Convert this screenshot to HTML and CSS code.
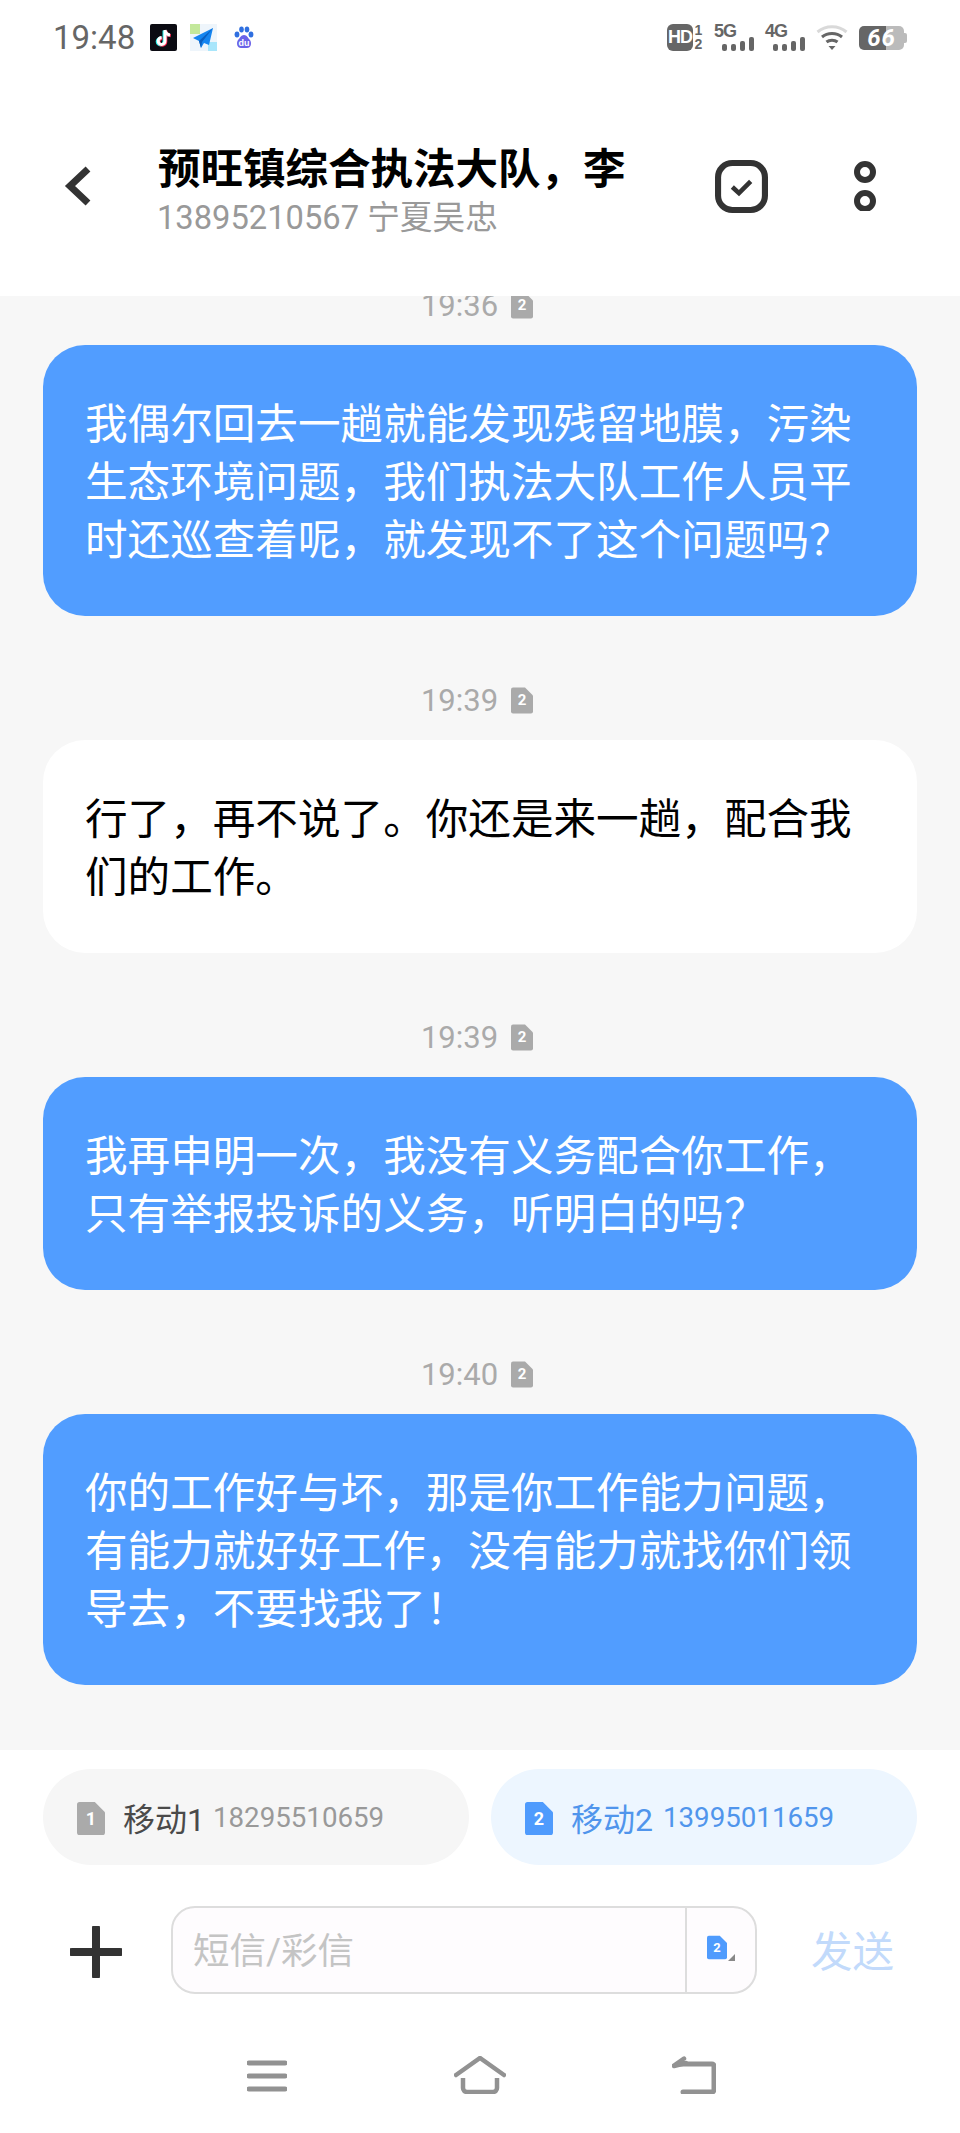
FILE: index.html
```html
<!DOCTYPE html>
<html lang="zh-CN">
<head>
    <meta charset="UTF-8">
    <meta name="viewport" content="width=device-width, initial-scale=1.0">
    <title>短信</title>
    <link rel="stylesheet" href="styles.css">
</head>
<body>
    <svg class="defs">
        <symbol id="sim" viewBox="0 0 22 26">
            <path d="M2 0h12l8 8v16a2 2 0 0 1-2 2H2a2 2 0 0 1-2-2V2a2 2 0 0 1 2-2z" fill="currentColor"/>
        </symbol>
    </svg>

    <div class="phone">
        <div class="status-bar">
            <div class="status-left">
                <span class="clock">19:48</span>
                <svg class="app-icon" viewBox="0 0 27 27">
                    <rect width="27" height="27" rx="2" fill="#0b0b12"/>
                    <path d="M15 6v11a3.4 3.4 0 1 1-3.4-3.4M15 6c.4 3 2.200 4.600 5 5" fill="none" stroke="#25f4ee" stroke-width="3" transform="translate(-1 .6)"/>
                    <path d="M15 6v11a3.400 3.400 0 1 1-3.400-3.400M15 6c.4 3 2.200 4.600 5 5" fill="none" stroke="#fe2c55" stroke-width="3" transform="translate(.8 .8)"/>
                    <path d="M15 6v11a3.400 3.400 0 1 1-3.400-3.400M15 6c.4 3 2.200 4.600 5 5" fill="none" stroke="#fff" stroke-width="3"/>
                </svg>
                <svg class="app-icon" viewBox="0 0 27 27">
                    <rect width="27" height="27" fill="#eef5fb"/>
                    <rect width="10" height="10" fill="#c3e89b"/>
                    <rect x="18" y="18" width="9" height="9" fill="#a9e6fb"/>
                    <path d="M23 4 3 14l6 3 2 7 3-5 5 2z" fill="#1585f0"/>
                    <path d="M23 4 9 17l2 7 1-6z" fill="#0b5fc0"/>
                </svg>
                <svg class="paw" viewBox="0 0 20 24">
                    <ellipse cx="3" cy="8.500" rx="2.400" ry="3" fill="#2f6fe0"/>
                    <ellipse cx="7.500" cy="3.500" rx="2.300" ry="3" fill="#2f6fe0"/>
                    <ellipse cx="13" cy="3.500" rx="2.300" ry="3" fill="#2f6fe0"/>
                    <ellipse cx="17" cy="8.500" rx="2.400" ry="3" fill="#2f6fe0"/>
                    <path d="M10 9c-3 0-4 3-6 5-2 3-1 8 3 8h6c4 0 5-5 3-8-2-2-3-5-6-5z" fill="#6a63e8"/>
                    <text x="10" y="20" class="paw-text">du</text>
                </svg>
            </div>
            <div class="status-right">
                <span class="hd">HD</span>
                <span class="sim-nums"><span>1</span><span>2</span></span>
                <span class="signal">
                    <span class="signal-name">5G</span>
                    <span class="bars"><i class="b1"></i><i class="b2"></i><i class="b3"></i><i class="b4"></i></span>
                </span>
                <span class="signal">
                    <span class="signal-name">4G</span>
                    <span class="bars"><i class="b1"></i><i class="b2"></i><i class="b3"></i><i class="b4"></i></span>
                </span>
                <svg class="wifi" viewBox="0 0 32 26">
                    <path d="M1.500 8C9.500 1 22.500 1 30.500 8" fill="none" stroke="#d9d9d9" stroke-width="3"/>
                    <path d="M6 13c5.500-4.600 14.500-4.600 20 0" fill="none" stroke="#666" stroke-width="3"/>
                    <path d="M10.500 18c3-2.500 8-2.500 11 0" fill="none" stroke="#666" stroke-width="3"/>
                    <path d="M12.500 22h7L16 26z" fill="#666"/>
                </svg>
                <span class="battery"><span class="battery-num">66</span></span>
            </div>
        </div>

        <header class="topbar">
            <svg class="back" viewBox="0 0 28 44">
                <path d="M24 5 6 22l18 17" fill="none" stroke="#333" stroke-width="7"/>
            </svg>
            <div class="contact">
                <div class="contact-name">预旺镇综合执法大队，李</div>
                <div class="contact-sub">13895210567 宁夏吴忠</div>
            </div>
            <svg class="select-icon" viewBox="0 0 52 52">
                <rect x="3" y="3" width="46" height="46" rx="14" fill="none" stroke="#333" stroke-width="6"/>
                <path d="M17 26.500l6.500 6L35 21" fill="none" stroke="#333" stroke-width="4.500"/>
            </svg>
            <svg class="more-icon" viewBox="0 0 22 50">
                <circle cx="11" cy="11" r="8" fill="none" stroke="#333" stroke-width="6"/>
                <circle cx="11" cy="40" r="8" fill="none" stroke="#333" stroke-width="6"/>
            </svg>
        </header>

        <main class="chat">
            <div class="messages">
                <div class="time-row"><span>19:36</span><span class="time-sim"><svg><use href="#sim"/></svg><b>2</b></span></div>
                <div class="bubble sent">我偶尔回去一趟就能发现残留地膜，污染生态环境问题，我们执法大队工作人员平时还巡查着呢，就发现不了这个问题吗？</div>

                <div class="time-row"><span>19:39</span><span class="time-sim"><svg><use href="#sim"/></svg><b>2</b></span></div>
                <div class="bubble received">行了，再不说了。你还是来一趟，配合我们的工作。</div>

                <div class="time-row"><span>19:39</span><span class="time-sim"><svg><use href="#sim"/></svg><b>2</b></span></div>
                <div class="bubble sent">我再申明一次，我没有义务配合你工作，只有举报投诉的义务，听明白的吗？</div>

                <div class="time-row"><span>19:40</span><span class="time-sim"><svg><use href="#sim"/></svg><b>2</b></span></div>
                <div class="bubble sent">你的工作好与坏，那是你工作能力问题，有能力就好好工作，没有能力就找你们领导去，不要找我了！</div>
            </div>
        </main>

        <div class="sim-picker">
            <div class="sim-pill">
                <span class="pill-sim"><svg><use href="#sim"/></svg><b>1</b></span>
                <span class="pill-name">移动1</span>
                <span class="pill-number">18295510659</span>
            </div>
            <div class="sim-pill active">
                <span class="pill-sim"><svg><use href="#sim"/></svg><b>2</b></span>
                <span class="pill-name">移动2</span>
                <span class="pill-number">13995011659</span>
            </div>
        </div>

        <div class="composer">
            <svg class="plus" viewBox="0 0 52 52">
                <path d="M26 2v48M2 26h48" fill="none" stroke="#333" stroke-width="8" stroke-linecap="round"/>
            </svg>
            <div class="input-box">
                <div class="input-text">短信/彩信</div>
                <div class="input-sim">
                    <span class="small-sim"><svg><use href="#sim"/></svg><b>2</b></span>
                    <i class="corner"></i>
                </div>
            </div>
            <div class="send">发送</div>
        </div>

        <nav class="navbar">
            <svg class="nav-menu" viewBox="0 0 40 32">
                <path d="M2 3h36M2 16h36M2 29h36" fill="none" stroke="#929292" stroke-width="5" stroke-linecap="round"/>
            </svg>
            <svg class="nav-home" viewBox="0 0 52 38">
                <path d="M2 19 26 2l24 17" fill="none" stroke="#929292" stroke-width="4.500" stroke-linecap="round"/>
                <path d="M9 22v10a4 4 0 0 0 4 4h26a4 4 0 0 0 4-4V22" fill="none" stroke="#929292" stroke-width="4.500"/>
            </svg>
            <svg class="nav-back" viewBox="0 0 44 38">
                <path d="M2 10 14 7M12 2.500l-10 7" fill="none" stroke="#929292" stroke-width="4.500" stroke-linecap="round"/>
                <path d="M8 8h32a2 2 0 0 1 2 2v24a2 2 0 0 1-2 2H11" fill="none" stroke="#929292" stroke-width="5" stroke-linecap="round"/>
            </svg>
        </nav>
    </div>
</body>
</html>
```

FILE: styles.css
```css
* {
    box-sizing: border-box;
}
body {
    margin: 0;
    background: white;
    font-family: Roboto, "Noto Sans CJK SC", sans-serif;
}
.defs {
    display: none;
}
.phone {
    width: 960px;
    height: 2133px;
    display: flex;
    flex-direction: column;
    overflow: hidden;
    background: white;
}

/* status bar */
.status-bar {
    height: 76px;
    flex: none;
    display: flex;
    justify-content: space-between;
    padding: 21px 53px 0;
    color: #666;
}
.status-left {
    height: 32px;
    display: flex;
    align-items: center;
}
.clock {
    font-size: 33px;
    width: 97px;
}
.app-icon {
    width: 27px;
    height: 27px;
    margin-right: 13px;
    margin-top: 1px;
}
.paw {
    width: 20px;
    height: 24px;
    margin-left: 4px;
    margin-top: 1px;
}
.paw-text {
    font-family: "Liberation Sans", sans-serif;
    font-size: 9px;
    font-weight: bold;
    fill: white;
    text-anchor: middle;
}
.status-right {
    display: flex;
    align-items: flex-start;
    margin-top: 3px;
}
.hd {
    width: 26px;
    height: 27px;
    background: #666;
    border-radius: 6px;
    color: white;
    font-family: "Liberation Sans", sans-serif;
    font-size: 18px;
    font-weight: bold;
    line-height: 27px;
    text-align: center;
    letter-spacing: -1px;
}
.sim-nums {
    width: 11px;
    display: flex;
    flex-direction: column;
    font-family: "Liberation Sans", sans-serif;
    font-size: 14px;
    font-weight: bold;
    line-height: 13.500px;
    text-align: center;
}
.signal {
    width: 40px;
    margin-left: 10px;
    display: flex;
    flex-direction: column;
}
.signal + .signal {
    margin-left: 11px;
}
.signal-name {
    font-family: "Liberation Sans", sans-serif;
    font-size: 18px;
    font-weight: bold;
    line-height: 14px;
    letter-spacing: -1px;
}
.bars {
    height: 15px;
    display: flex;
    align-items: flex-end;
    justify-content: flex-end;
    gap: 4px;
    margin-top: -2px;
}
.bars i {
    width: 5px;
    background: #666;
    border-radius: 2px;
}
.b1, .b2 {
    height: 7px;
}
.b3 {
    height: 10px;
}
.b4 {
    height: 14px;
}
.wifi {
    width: 32px;
    height: 26px;
    margin-left: 11px;
}
.battery {
    width: 45px;
    height: 24px;
    margin-left: 11px;
    margin-right: 3px;
    margin-top: 2px;
    border-radius: 5px;
    background: linear-gradient(to right, #666 60%, #bbb 60%);
    color: white;
    font-size: 24px;
    font-weight: bold;
    font-style: italic;
    line-height: 24px;
    text-align: center;
    position: relative;
}
.battery:after {
    content: "";
    position: absolute;
    right: -3px;
    top: 7px;
    width: 3px;
    height: 10px;
    background: #bbb;
    border-radius: 0 2px 2px 0;
}
.battery-num {
    letter-spacing: 1px;
}

/* header */
.topbar {
    height: 220px;
    flex: none;
    display: flex;
    align-items: flex-start;
    position: relative;
}
.back {
    width: 28px;
    height: 44px;
    margin: 88px 0 0 64px;
    flex: none;
}
.contact {
    width: 558px;
    margin: 64px 0 0 66px;
    flex: none;
}
.contact-name {
    font-size: 42.500px;
    font-weight: bold;
    line-height: 60px;
    color: black;
    white-space: nowrap;
}
.contact-sub {
    font-size: 32.700px;
    line-height: 40px;
    margin-top: -2px;
    margin-left: -1px;
    color: #999;
}
.select-icon {
    width: 53px;
    height: 53px;
    margin: 84px 0 0 -1px;
    flex: none;
}
.more-icon {
    width: 22px;
    height: 50px;
    margin: 85px 0 0 86px;
    flex: none;
}

/* messages */
.chat {
    height: 1454px;
    flex: none;
    background: #f7f7f7;
    overflow: hidden;
    padding: 0 43px;
}
.messages {
    margin-top: -75px;
}
.time-row {
    height: 124px;
    padding: 67px 6px 0 0;
    display: flex;
    justify-content: center;
    align-items: flex-start;
    font-size: 31px;
    line-height: 36px;
    color: #aaa;
}
.time-sim {
    width: 22px;
    height: 27px;
    margin: 4px 0 0 13px;
    color: #aaa;
    position: relative;
}
.time-sim svg {
    width: 22px;
    height: 27px;
    display: block;
}
.time-sim b {
    position: absolute;
    left: 0;
    right: 0;
    top: 5px;
    text-align: center;
    color: white;
    font-size: 15px;
    line-height: 16px;
}
.bubble {
    width: 874px;
    padding: 49.500px 42px 47.500px;
    border-radius: 42px;
    font-size: 42.600px;
    line-height: 58px;
}
.sent {
    background: #519dff;
    color: white;
}
.received {
    background: white;
    color: black;
}

/* sim choice */
.sim-picker {
    height: 156px;
    flex: none;
    display: flex;
    gap: 22px;
    padding: 19px 43px 0;
}
.sim-pill {
    width: 426px;
    height: 96px;
    border-radius: 48px;
    background: #f6f6f6;
    display: flex;
    align-items: center;
    padding-left: 34px;
    color: #4a4a4a;
}
.sim-pill.active {
    background: #edf6ff;
    color: #5095ec;
}
.pill-sim {
    width: 28px;
    height: 35px;
    flex: none;
    color: #aaa;
    position: relative;
    margin-top: 2px;
}
.active .pill-sim {
    color: #4f9bfd;
}
.pill-sim svg {
    width: 28px;
    height: 35px;
    display: block;
}
.pill-sim b {
    position: absolute;
    left: 0;
    right: 0;
    top: 8px;
    text-align: center;
    color: white;
    font-size: 18px;
    line-height: 20px;
}
.pill-name {
    margin-left: 18px;
    font-size: 32px;
    white-space: nowrap;
}
.pill-number {
    margin-left: 8px;
    font-size: 27.700px;
    color: #999;
}
.active .pill-number {
    color: #5095ec;
    margin-left: 10px;
}

/* input row */
.composer {
    height: 108px;
    flex: none;
    display: flex;
    align-items: flex-start;
}
.plus {
    width: 52px;
    height: 52px;
    margin: 20px 0 0 70px;
    flex: none;
}
.input-box {
    width: 586px;
    height: 88px;
    margin-left: 49px;
    display: flex;
    border: 2.500px solid #ddd;
    border-radius: 24px;
    background: #fefcfe;
    flex: none;
}
.input-text {
    flex: 1;
    padding-left: 20px;
    font-size: 36.500px;
    line-height: 88px;
    color: #c4c4c4;
}
.input-sim {
    width: 70px;
    border-left: 2.500px solid #ddd;
    flex: none;
    position: relative;
}
.small-sim {
    position: absolute;
    left: 20px;
    top: 27px;
    width: 20px;
    height: 25px;
    color: #4f9bfd;
}
.small-sim svg {
    width: 20px;
    height: 25px;
    display: block;
}
.small-sim b {
    position: absolute;
    left: 0;
    right: 0;
    top: 5px;
    text-align: center;
    color: white;
    font-size: 13px;
    line-height: 16px;
}
.corner {
    position: absolute;
    left: 41px;
    top: 46px;
    border-left: 7px solid transparent;
    border-bottom: 7px solid #888;
}
.send {
    margin: 20px 0 0 54px;
    font-size: 41.500px;
    line-height: 54px;
    color: #c2dafb;
}

/* nav */
.navbar {
    flex: 1;
    position: relative;
}
.nav-menu,
.nav-home,
.nav-back {
    position: absolute;
}
.nav-menu {
    left: 247px;
    top: 46px;
    width: 40px;
    height: 32px;
}
.nav-home {
    left: 454px;
    top: 42px;
    width: 52px;
    height: 38px;
}
.nav-back {
    left: 672px;
    top: 42px;
    width: 44px;
    height: 38px;
}
```
